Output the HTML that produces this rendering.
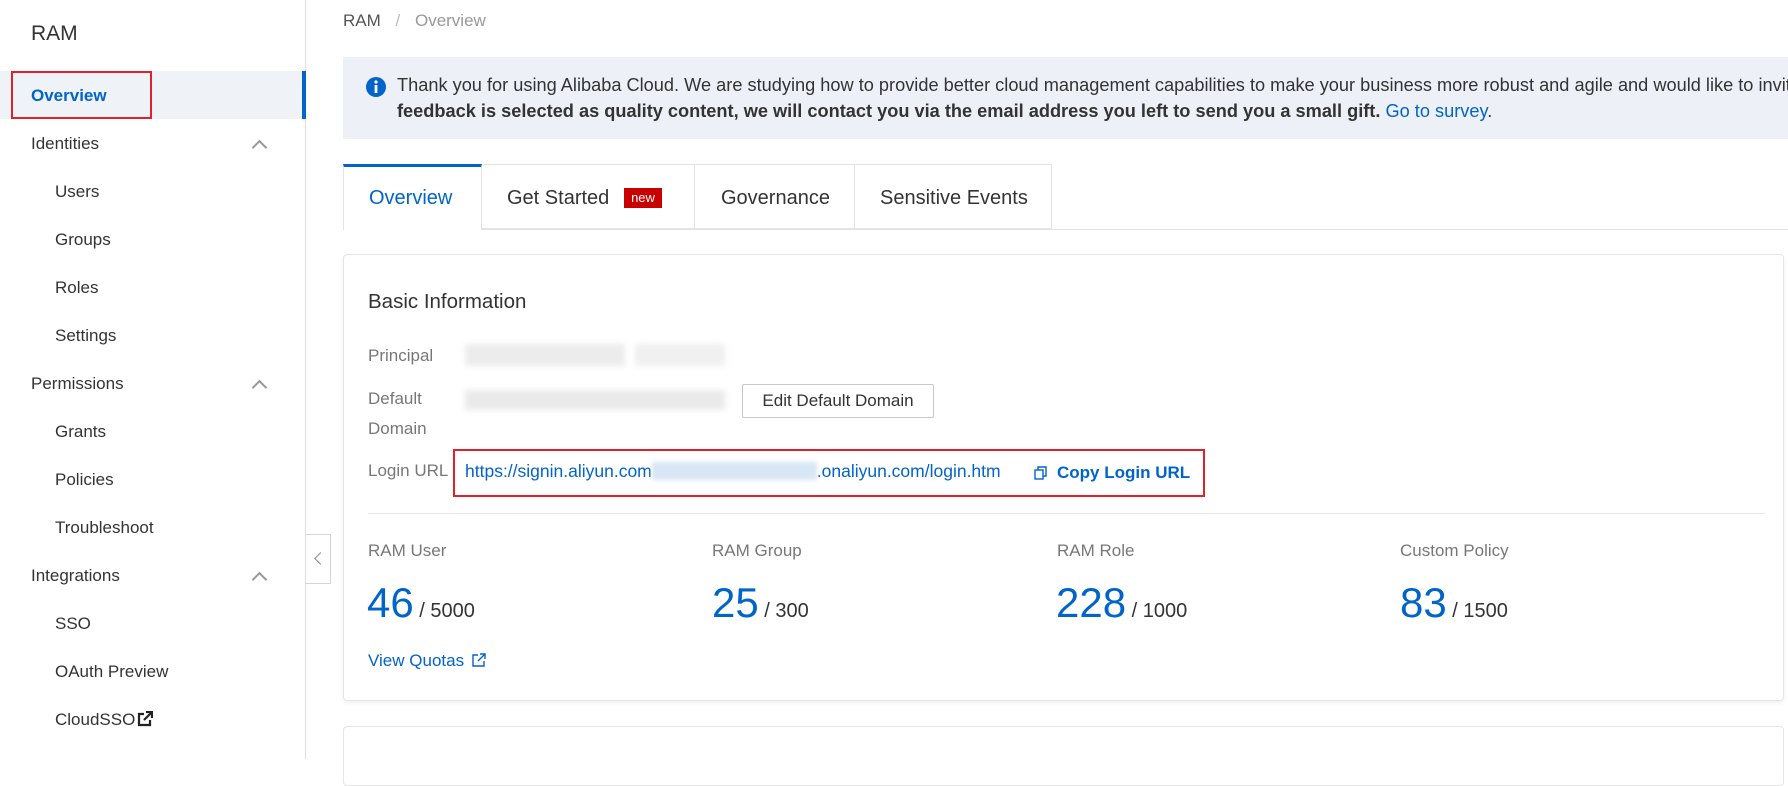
<!DOCTYPE html>
<html><head><meta charset="utf-8"><style>
*{box-sizing:border-box;margin:0;padding:0}
body{width:1788px;height:759px;overflow:hidden;background:#fff;font-family:"Liberation Sans",Arial,sans-serif;color:#333;position:relative}
.abs{position:absolute;white-space:nowrap}
.side{position:absolute;left:0;top:0;width:306px;height:759px;border-right:1px solid #dcdcdc;background:#fff}
.mi{position:absolute;left:31px;font-size:17px;color:#333;transform:translateY(-50%)}
.sub{left:55px}
.chev{position:absolute;left:254px;width:11px;height:11px;border-left:2px solid #999;border-top:2px solid #999;transform:rotate(45deg)}
.lbl{color:#777;font-size:17px}
.num{font-size:42px;color:#0064c8}
.den{font-size:20px;color:#333}
</style></head><body>
<div class="side">
  <div class="abs" style="left:31px;top:22px;font-size:21px;color:#333">RAM</div>
  <div class="abs" style="left:0;top:71px;width:306px;height:48px;background:#eff3f8"></div>
  <div class="abs" style="left:302px;top:71px;width:4px;height:48px;background:#0064c8"></div>
  <div class="abs" style="left:11px;top:71px;width:141px;height:48px;border:2px solid #e0202a"></div>
  <div class="mi" style="top:96px;font-weight:bold;color:#0064c8">Overview</div>
  <div class="mi" style="top:144px">Identities</div><div class="chev" style="top:142px"></div>
  <div class="mi sub" style="top:192px">Users</div>
  <div class="mi sub" style="top:240px">Groups</div>
  <div class="mi sub" style="top:288px">Roles</div>
  <div class="mi sub" style="top:336px">Settings</div>
  <div class="mi" style="top:384px">Permissions</div><div class="chev" style="top:382px"></div>
  <div class="mi sub" style="top:432px">Grants</div>
  <div class="mi sub" style="top:480px">Policies</div>
  <div class="mi sub" style="top:528px">Troubleshoot</div>
  <div class="mi" style="top:576px">Integrations</div><div class="chev" style="top:574px"></div>
  <div class="mi sub" style="top:624px">SSO</div>
  <div class="mi sub" style="top:672px">OAuth Preview</div>
  <div class="mi sub" style="top:720px">CloudSSO <svg width="16" height="16" viewBox="0 0 16 16" style="vertical-align:-2px;margin-left:-3px"><path d="M7 3H2v11h11V9" fill="none" stroke="#222" stroke-width="2.2"/><path d="M9 1h6v6M15 1L7 9" fill="none" stroke="#222" stroke-width="2.2"/></svg></div>
</div>
<div class="abs" style="left:306px;top:534px;width:25px;height:50px;border:1px solid #d5d5d5;border-left:none;background:#fff"><div style="position:absolute;left:10px;top:19px;width:9px;height:9px;border-left:1.5px solid #888;border-bottom:1.5px solid #888;transform:rotate(45deg)"></div></div>

<div class="abs" style="left:343px;top:11px;font-size:17px;color:#555">RAM <span style="color:#bbb;margin:0 10px">/</span> <span style="color:#999">Overview</span></div>

<div class="abs" style="left:343px;top:57px;width:1445px;height:82px;background:#edf1f7;overflow:hidden">
  <svg class="abs" style="left:23px;top:20px" width="20" height="20" viewBox="0 0 20 20"><circle cx="10" cy="10" r="10" fill="#0064c8"/><rect x="8.6" y="8" width="2.8" height="8" fill="#fff"/><circle cx="10" cy="5" r="1.6" fill="#fff"/></svg>
  <div class="abs" style="left:54px;top:18px;font-size:18.2px;color:#333">Thank you for using Alibaba Cloud. We are studying how to provide better cloud management capabilities to make your business more robust and agile and would like to invite you</div>
  <div class="abs" style="left:54px;top:44px;font-size:18.2px;color:#333"><b>feedback is selected as quality content, we will contact you via the email address you left to send you a small gift.</b> <span style="color:#0064c8">Go to survey</span>.</div>
</div>

<div class="abs" style="left:343px;top:229px;width:1445px;height:1px;background:#e3e3e3"></div>
<div class="abs" style="left:343px;top:164px;width:139px;height:66px;border:1px solid #e3e3e3;border-top:3px solid #0064c8;border-bottom:none;background:#fff"></div>
<div class="abs" style="left:482px;top:164px;width:213px;height:65px;border:1px solid #e3e3e3;border-left:none"></div>
<div class="abs" style="left:695px;top:164px;width:160px;height:65px;border:1px solid #e3e3e3;border-left:none"></div>
<div class="abs" style="left:855px;top:164px;width:197px;height:65px;border:1px solid #e3e3e3;border-left:none"></div>
<div class="abs" style="left:369px;top:187px;font-size:20px;color:#0064c8">Overview</div>
<div class="abs" style="left:507px;top:187px;font-size:20px;color:#333">Get Started</div>
<div class="abs" style="left:624px;top:188px;width:38px;height:20px;background:#c80000;color:#fff;font-size:13px;text-align:center;line-height:20px">new</div>
<div class="abs" style="left:721px;top:187px;font-size:20px;color:#333">Governance</div>
<div class="abs" style="left:880px;top:187px;font-size:20px;color:#333">Sensitive Events</div>

<div class="abs" style="left:343px;top:254px;width:1441px;height:447px;border:1px solid #e5e5e5;border-radius:4px;box-shadow:0 2px 4px rgba(0,0,0,.06)"></div>
<div class="abs" style="left:368px;top:290px;font-size:20.5px;color:#333">Basic Information</div>
<div class="abs lbl" style="left:368px;top:346px">Principal</div>
<div class="abs" style="left:465px;top:344px;width:160px;height:22px;background:#ececec;filter:blur(3px)"></div>
<div class="abs" style="left:635px;top:344px;width:90px;height:22px;background:#f0f0f0;filter:blur(3px)"></div>
<div class="abs lbl" style="left:368px;top:389px">Default</div>
<div class="abs lbl" style="left:368px;top:419px">Domain</div>
<div class="abs" style="left:465px;top:390px;width:260px;height:20px;background:#eaeaea;filter:blur(3px)"></div>
<div class="abs" style="left:742px;top:384px;width:192px;height:34px;border:1px solid #c8c8c8;border-radius:2px;font-size:17px;color:#333;text-align:center;line-height:32px">Edit Default Domain</div>
<div class="abs lbl" style="left:368px;top:461px">Login URL</div>
<div class="abs" style="left:453px;top:449px;width:752px;height:48px;border:2px solid #e0202a"></div>
<div class="abs" style="left:465px;top:461px;font-size:17.5px;color:#0064c8">https://signin.aliyun.com<span style="display:inline-block;width:165px;height:18px;background:#d9e6f5;vertical-align:-3px;filter:blur(2px)"></span>.onaliyun.com/login.htm</div>
<svg class="abs" style="left:1034px;top:466px" width="14" height="14" viewBox="0 0 14 14"><rect x="1" y="4" width="8" height="9" fill="none" stroke="#0064c8" stroke-width="1.4"/><path d="M4 4V1h8v9H9" fill="none" stroke="#0064c8" stroke-width="1.4"/></svg>
<div class="abs" style="left:1057px;top:463px;font-size:17px;color:#0064c8;font-weight:bold">Copy Login URL</div>
<div class="abs" style="left:368px;top:513px;width:1397px;height:1px;background:#e8e8e8"></div>

<div class="abs lbl" style="left:368px;top:541px">RAM User</div>
<div class="abs lbl" style="left:712px;top:541px">RAM Group</div>
<div class="abs lbl" style="left:1057px;top:541px">RAM Role</div>
<div class="abs lbl" style="left:1400px;top:541px">Custom Policy</div>
<div class="abs" style="left:367px;top:579px"><span class="num">46</span><span class="den"> / 5000</span></div>
<div class="abs" style="left:712px;top:579px"><span class="num">25</span><span class="den"> / 300</span></div>
<div class="abs" style="left:1056px;top:579px"><span class="num">228</span><span class="den"> / 1000</span></div>
<div class="abs" style="left:1400px;top:579px"><span class="num">83</span><span class="den"> / 1500</span></div>
<div class="abs" style="left:368px;top:651px;font-size:17px;color:#0064c8">View Quotas <svg width="14" height="14" viewBox="0 0 14 14" style="vertical-align:-1px;margin-left:3px"><path d="M6 2H1v11h11V8" fill="none" stroke="#0064c8" stroke-width="1.4"/><path d="M8 1h5v5M13 1L6 8" fill="none" stroke="#0064c8" stroke-width="1.4"/></svg></div>

<div class="abs" style="left:343px;top:726px;width:1441px;height:60px;border:1px solid #e5e5e5;border-radius:4px"></div>
</body></html>
